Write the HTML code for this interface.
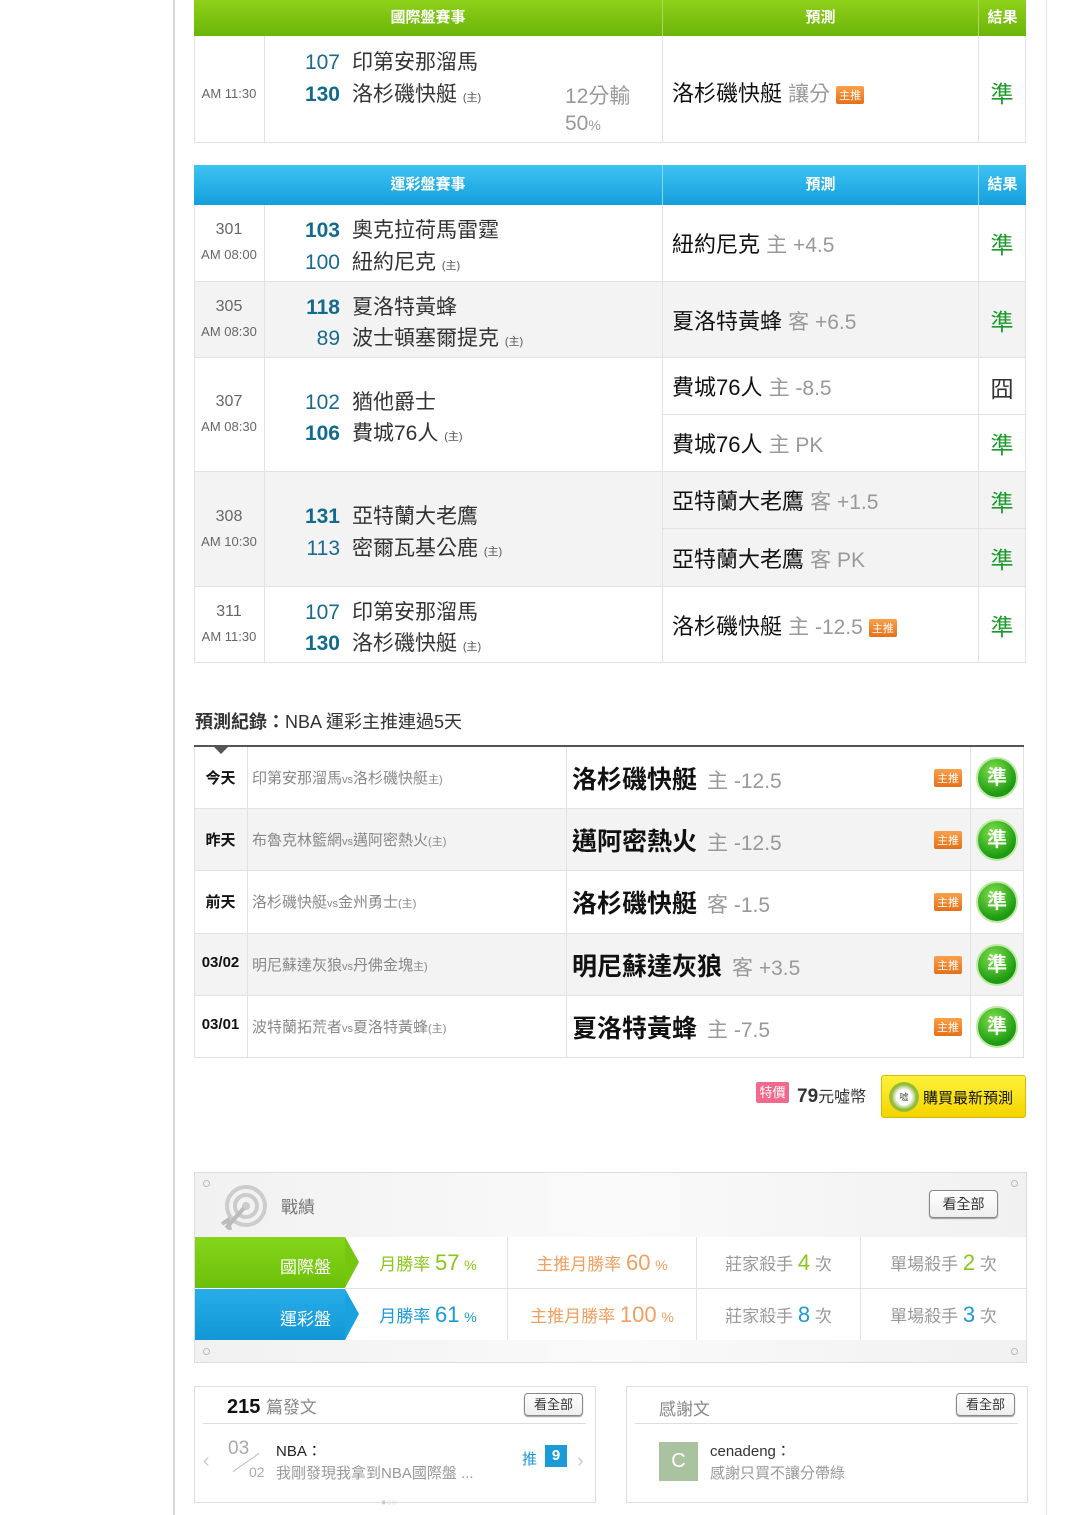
<!DOCTYPE html>
<html><head><meta charset="utf-8"><style>
*{margin:0;padding:0;box-sizing:border-box}
body{width:1080px;height:1515px;background:#fff;position:relative;overflow:hidden;font-family:"Liberation Sans","Noto Sans CJK TC",sans-serif;color:#222}
.a{position:absolute}
.vl{position:absolute;width:1px;background:#e2e2e2}
.hl{position:absolute;height:1px;background:#e2e2e2}
.hdr{position:absolute;height:36px;color:#fff;font-weight:bold;font-size:15px;line-height:36px;text-align:center}
.g{background:linear-gradient(#8fd11a,#6cb40a)}
.b{background:linear-gradient(#3ec3f2,#149fdc)}
.tm{position:absolute;width:70px;text-align:center;color:#666;font-size:13px}
.tm b{display:block;font-weight:normal;font-size:16px;margin-bottom:8px}
.team{position:absolute;font-size:21px;color:#333;white-space:nowrap}
.team span{display:inline-block;width:43px;text-align:right;margin-right:12px;color:#1a6a8e}
.team span.w{font-weight:bold;color:#126a8c}
.team small{font-size:11px;color:#555}
.pr{position:absolute;font-size:22px;color:#111;white-space:nowrap}
.pr i{font-style:normal;color:#999;font-size:21px}
.tag{display:inline-block;background:linear-gradient(#f9a14a,#e4701a);color:#fff;font-size:11px;padding:1px 3px;margin-left:6px;vertical-align:middle;border-radius:2px}
.res{position:absolute;width:48px;text-align:center;font-size:23px;color:#1a9a2a}
.grey{position:absolute;background:#f3f3f3}
.rec{position:absolute;left:194px;width:829px;height:62px}
.rec .d{position:absolute;left:0;width:53px;text-align:center;top:20px;font-size:15px;font-weight:bold;color:#111}
.rec .m{position:absolute;left:58px;top:20px;font-size:15px;color:#888;white-space:nowrap}
.rec .m small{font-size:11px}
.rec .p{position:absolute;left:378px;top:13px;font-size:25px;font-weight:bold;color:#111;white-space:nowrap}
.rec .p i{font-style:normal;font-weight:normal;color:#999;font-size:21px;margin-left:10px}
.rec .t{position:absolute;left:740px;top:22px}
.rec .t .tag{margin:0}
.rec .c{position:absolute;left:782px;top:10px;width:42px;height:42px;border-radius:50%;background:radial-gradient(circle at 40% 30%,#7fe04a,#1c9a12 70%);border:2px solid #bfe8a8;color:#fff;font-size:20px;font-weight:bold;text-align:center;line-height:38px}
.cell{position:absolute;font-size:17px;color:#999;text-align:center;line-height:52px}
.cell em{font-style:normal;font-size:22px}
.btn{position:absolute;border:1px solid #888;border-radius:4px;font-size:14px;color:#333;text-align:center;background:linear-gradient(#fff,#eee);box-shadow:0 1px 1px #999}
</style></head><body>
<div class="vl" style="left:173px;top:0;height:1515px;background:#d8d8d8;width:2px"></div>
<div class="vl" style="left:1046px;top:0;height:1515px;background:#e6e6e6"></div>

<!-- table 1 -->
<div class="hdr g" style="left:194px;top:0;width:468px">國際盤賽事</div>
<div class="hdr g" style="left:663px;top:0;width:315px">預測</div>
<div class="hdr g" style="left:979px;top:0;width:47px">結果</div>
<div class="vl" style="left:662px;top:0;height:36px;background:#a8d860"></div>
<div class="vl" style="left:978px;top:0;height:36px;background:#a8d860"></div>
<div class="vl" style="left:194px;top:36px;height:107px"></div>
<div class="vl" style="left:264px;top:36px;height:107px"></div>
<div class="vl" style="left:662px;top:36px;height:107px"></div>
<div class="vl" style="left:978px;top:36px;height:107px"></div>
<div class="vl" style="left:1025px;top:36px;height:107px"></div>
<div class="hl" style="left:194px;top:142px;width:832px"></div>
<div class="tm" style="left:194px;top:86px">AM 11:30</div>
<div class="team" style="left:297px;top:46px"><span>107</span>印第安那溜馬</div>
<div class="team" style="left:297px;top:78px"><span class="w">130</span>洛杉磯快艇 <small>(主)</small></div>
<div class="a" style="left:565px;top:83px;font-size:21px;color:#999;line-height:27px">12分輸<br>50<small style="font-size:14px">%</small></div>
<div class="pr" style="left:672px;top:76px">洛杉磯快艇 <i>讓分</i><span class="tag">主推</span></div>
<div class="res" style="left:978px;top:75px">準</div>

<!-- table 2 -->
<div class="grey" style="left:195px;top:281px;width:830px;height:76px"></div>
<div class="grey" style="left:195px;top:471px;width:830px;height:115px"></div>
<div class="hdr b" style="left:194px;top:165px;width:468px;height:40px;line-height:40px">運彩盤賽事</div>
<div class="hdr b" style="left:663px;top:165px;width:315px;height:40px;line-height:40px">預測</div>
<div class="hdr b" style="left:979px;top:165px;width:47px;height:40px;line-height:40px">結果</div>
<div class="vl" style="left:662px;top:165px;height:40px;background:#8fd8f5"></div>
<div class="vl" style="left:978px;top:165px;height:40px;background:#8fd8f5"></div>
<div class="vl" style="left:194px;top:205px;height:457px"></div>
<div class="vl" style="left:264px;top:205px;height:457px"></div>
<div class="vl" style="left:662px;top:205px;height:457px"></div>
<div class="vl" style="left:978px;top:205px;height:457px"></div>
<div class="vl" style="left:1025px;top:205px;height:457px"></div>
<div class="hl" style="left:194px;top:281px;width:832px"></div>
<div class="hl" style="left:194px;top:357px;width:832px"></div>
<div class="hl" style="left:662px;top:414px;width:364px"></div>
<div class="hl" style="left:194px;top:471px;width:832px"></div>
<div class="hl" style="left:662px;top:528px;width:364px"></div>
<div class="hl" style="left:194px;top:586px;width:832px"></div>
<div class="hl" style="left:194px;top:662px;width:832px"></div>

<div class="tm" style="left:194px;top:221px"><b>301</b>AM 08:00</div>
<div class="team" style="left:297px;top:214px"><span class="w">103</span>奧克拉荷馬雷霆</div>
<div class="team" style="left:297px;top:246px"><span>100</span>紐約尼克 <small>(主)</small></div>
<div class="pr" style="left:672px;top:227px">紐約尼克 <i>主 +4.5</i></div>
<div class="res" style="left:978px;top:226px">準</div>

<div class="tm" style="left:194px;top:298px"><b>305</b>AM 08:30</div>
<div class="team" style="left:297px;top:291px"><span class="w">118</span>夏洛特黃蜂</div>
<div class="team" style="left:297px;top:322px"><span>89</span>波士頓塞爾提克 <small>(主)</small></div>
<div class="pr" style="left:672px;top:304px">夏洛特黃蜂 <i>客 +6.5</i></div>
<div class="res" style="left:978px;top:303px">準</div>

<div class="tm" style="left:194px;top:393px"><b>307</b>AM 08:30</div>
<div class="team" style="left:297px;top:386px"><span>102</span>猶他爵士</div>
<div class="team" style="left:297px;top:417px"><span class="w">106</span>費城76人 <small>(主)</small></div>
<div class="pr" style="left:672px;top:370px">費城76人 <i>主 -8.5</i></div>
<div class="res" style="left:978px;top:370px;color:#333">囧</div>
<div class="pr" style="left:672px;top:427px">費城76人 <i>主 PK</i></div>
<div class="res" style="left:978px;top:426px">準</div>

<div class="tm" style="left:194px;top:508px"><b>308</b>AM 10:30</div>
<div class="team" style="left:297px;top:500px"><span class="w">131</span>亞特蘭大老鷹</div>
<div class="team" style="left:297px;top:532px"><span>113</span>密爾瓦基公鹿 <small>(主)</small></div>
<div class="pr" style="left:672px;top:484px">亞特蘭大老鷹 <i>客 +1.5</i></div>
<div class="res" style="left:978px;top:484px">準</div>
<div class="pr" style="left:672px;top:542px">亞特蘭大老鷹 <i>客 PK</i></div>
<div class="res" style="left:978px;top:541px">準</div>

<div class="tm" style="left:194px;top:603px"><b>311</b>AM 11:30</div>
<div class="team" style="left:297px;top:596px"><span>107</span>印第安那溜馬</div>
<div class="team" style="left:297px;top:627px"><span class="w">130</span>洛杉磯快艇 <small>(主)</small></div>
<div class="pr" style="left:672px;top:609px">洛杉磯快艇 <i>主 -12.5</i><span class="tag">主推</span></div>
<div class="res" style="left:978px;top:608px">準</div>

<!-- record -->
<div class="a" style="left:195px;top:708px;font-size:18px;color:#333"><b>預測紀錄：</b>NBA 運彩主推連過5天</div>
<div class="a" style="left:194px;top:745px;width:830px;height:2px;background:#555"></div>
<div class="a" style="left:214px;top:747px;width:0;height:0;border-left:7px solid transparent;border-right:7px solid transparent;border-top:7px solid #555"></div>
<div class="grey" style="left:195px;top:808px;width:828px;height:62px"></div>
<div class="grey" style="left:195px;top:933px;width:828px;height:62px"></div>
<div class="vl" style="left:194px;top:747px;height:310px"></div>
<div class="vl" style="left:247px;top:747px;height:310px"></div>
<div class="vl" style="left:566px;top:747px;height:310px"></div>
<div class="vl" style="left:970px;top:747px;height:310px"></div>
<div class="vl" style="left:1023px;top:747px;height:310px"></div>
<div class="hl" style="left:194px;top:808px;width:830px"></div>
<div class="hl" style="left:194px;top:870px;width:830px"></div>
<div class="hl" style="left:194px;top:933px;width:830px"></div>
<div class="hl" style="left:194px;top:995px;width:830px"></div>
<div class="hl" style="left:194px;top:1057px;width:830px"></div>

<div class="rec" style="top:747px"><div class="d">今天</div><div class="m">印第安那溜馬<small>vs</small>洛杉磯快艇<small>主)</small></div><div class="p">洛杉磯快艇<i>主 -12.5</i></div><div class="t"><span class="tag">主推</span></div><div class="c">準</div></div>
<div class="rec" style="top:809px"><div class="d">昨天</div><div class="m">布魯克林籃網<small>vs</small>邁阿密熱火<small>(主)</small></div><div class="p">邁阿密熱火<i>主 -12.5</i></div><div class="t"><span class="tag">主推</span></div><div class="c">準</div></div>
<div class="rec" style="top:871px"><div class="d">前天</div><div class="m">洛杉磯快艇<small>vs</small>金州勇士<small>(主)</small></div><div class="p">洛杉磯快艇<i>客 -1.5</i></div><div class="t"><span class="tag">主推</span></div><div class="c">準</div></div>
<div class="rec" style="top:934px"><div class="d">03/02</div><div class="m">明尼蘇達灰狼<small>vs</small>丹佛金塊<small>主)</small></div><div class="p">明尼蘇達灰狼<i>客 +3.5</i></div><div class="t"><span class="tag">主推</span></div><div class="c">準</div></div>
<div class="rec" style="top:996px"><div class="d">03/01</div><div class="m">波特蘭拓荒者<small>vs</small>夏洛特黃蜂<small>(主)</small></div><div class="p">夏洛特黃蜂<i>主 -7.5</i></div><div class="t"><span class="tag">主推</span></div><div class="c">準</div></div>

<!-- price -->
<div class="a" style="left:756px;top:1082px;width:33px;height:21px;background:#f06a8e;color:#fff;font-size:13px;text-align:center;line-height:21px;border-radius:2px">特價</div>
<div class="a" style="left:797px;top:1083px;font-size:16px;color:#333"><b style="font-size:19px">79</b>元噓幣</div>
<div class="a" style="left:881px;top:1075px;width:145px;height:43px;background:linear-gradient(#fff23a,#f3d400);border:1px solid #d8b800;border-radius:3px"></div>
<div class="a" style="left:889px;top:1082px;width:30px;height:30px;border-radius:50%;background:radial-gradient(#fff 35%,#8db83a 60%,#e6d200);font-size:9px;text-align:center;line-height:30px;color:#555">噓</div>
<div class="a" style="left:923px;top:1087px;font-size:15px;color:#111">購買最新預測</div>

<!-- stats -->
<div class="a" style="left:194px;top:1172px;width:833px;height:191px;background:linear-gradient(90deg,#f1f1f1,#fafafa 50%,#f1f1f1);border:1px solid #ddd"></div>
<div class="a" style="left:203px;top:1180px;width:7px;height:7px;border:1px solid #bbb;border-radius:50%"></div>
<div class="a" style="left:1011px;top:1180px;width:7px;height:7px;border:1px solid #bbb;border-radius:50%"></div>
<div class="a" style="left:203px;top:1348px;width:7px;height:7px;border:1px solid #bbb;border-radius:50%"></div>
<div class="a" style="left:1011px;top:1348px;width:7px;height:7px;border:1px solid #bbb;border-radius:50%"></div>
<svg class="a" style="left:218px;top:1184px" width="52" height="48" viewBox="0 0 52 48"><circle cx="28" cy="22" r="19" fill="none" stroke="#ccc" stroke-width="4"/><circle cx="28" cy="22" r="11" fill="none" stroke="#ccc" stroke-width="4"/><circle cx="28" cy="22" r="4" fill="#ccc"/><path d="M26 24 L8 44 M4 40 L10 36 L12 46" stroke="#bbb" stroke-width="4" fill="none"/></svg>
<div class="a" style="left:281px;top:1193px;font-size:17px;color:#777">戰績</div>
<div class="btn" style="left:929px;top:1190px;width:69px;height:28px;line-height:26px">看全部</div>
<div class="a" style="left:195px;top:1237px;width:831px;height:103px;background:#fff"></div>
<div class="a" style="left:195px;top:1237px;width:150px;height:51px;background:linear-gradient(#86d51b,#6cbf08)"></div>
<div class="a" style="left:345px;top:1237px;width:0;height:0;border-top:25px solid transparent;border-bottom:26px solid transparent;border-left:14px solid #75c60e"></div>
<div class="a" style="left:195px;top:1289px;width:150px;height:51px;background:linear-gradient(#27aee8,#1297d6)"></div>
<div class="a" style="left:345px;top:1289px;width:0;height:0;border-top:25px solid transparent;border-bottom:26px solid transparent;border-left:14px solid #1aa2de"></div>
<div class="a" style="left:280px;top:1253px;color:#fff;font-size:17px">國際盤</div>
<div class="a" style="left:280px;top:1305px;color:#fff;font-size:17px">運彩盤</div>
<div class="hl" style="left:345px;top:1288px;width:681px"></div>
<div class="vl" style="left:507px;top:1237px;height:103px"></div>
<div class="vl" style="left:696px;top:1237px;height:103px"></div>
<div class="vl" style="left:860px;top:1237px;height:103px"></div>
<div class="cell" style="left:360px;top:1237px;width:136px;color:#8bc61a">月勝率 <em>57</em> <small>%</small></div>
<div class="cell" style="left:508px;top:1237px;width:188px;color:#f0a060">主推月勝率 <em>60</em> <small>%</small></div>
<div class="cell" style="left:697px;top:1237px;width:163px">莊家殺手 <em style="color:#8bc61a">4</em> 次</div>
<div class="cell" style="left:861px;top:1237px;width:165px">單場殺手 <em style="color:#8bc61a">2</em> 次</div>
<div class="cell" style="left:360px;top:1289px;width:136px;color:#1a9ad6">月勝率 <em>61</em> <small>%</small></div>
<div class="cell" style="left:508px;top:1289px;width:188px;color:#f0a060">主推月勝率 <em>100</em> <small>%</small></div>
<div class="cell" style="left:697px;top:1289px;width:163px">莊家殺手 <em style="color:#1a9ad6">8</em> 次</div>
<div class="cell" style="left:861px;top:1289px;width:165px">單場殺手 <em style="color:#1a9ad6">3</em> 次</div>

<!-- posts -->
<div class="a" style="left:194px;top:1386px;width:402px;height:117px;border:1px solid #ddd"></div>
<div class="a" style="left:227px;top:1393px;font-size:20px;color:#111"><b>215</b> <span style="font-size:17px;color:#888">篇發文</span></div>
<div class="btn" style="left:524px;top:1393px;width:59px;height:23px;line-height:21px;font-size:13px">看全部</div>
<div class="hl" style="left:203px;top:1423px;width:383px;background:#ddd"></div>
<div class="a" style="left:203px;top:1450px;font-size:20px;color:#ccc">‹</div>
<div class="a" style="left:577px;top:1450px;font-size:20px;color:#ccc">›</div>
<div class="a" style="left:228px;top:1438px;font-size:19px;color:#aaa">03</div>
<div class="a" style="left:230px;top:1462px;width:32px;height:1px;background:#bbb;transform:rotate(-35deg)"></div>
<div class="a" style="left:249px;top:1464px;font-size:14px;color:#aaa">02</div>
<div class="a" style="left:276px;top:1440px;font-size:15px;color:#222">NBA：</div>
<div class="a" style="left:276px;top:1462px;font-size:15px;color:#999">我剛發現我拿到NBA國際盤 ...</div>
<div class="a" style="left:522px;top:1448px;font-size:15px;color:#1a9ad6">推</div>
<div class="a" style="left:545px;top:1445px;width:22px;height:22px;background:#1a9ad6;color:#fff;font-weight:bold;font-size:15px;text-align:center;line-height:22px">9</div>
<div class="a" style="left:381px;top:1497px;font-size:9px;color:#ccc">●○○</div>

<div class="a" style="left:626px;top:1386px;width:402px;height:117px;border:1px solid #ddd"></div>
<div class="a" style="left:659px;top:1395px;font-size:17px;color:#888">感謝文</div>
<div class="btn" style="left:956px;top:1393px;width:59px;height:23px;line-height:21px;font-size:13px">看全部</div>
<div class="hl" style="left:635px;top:1423px;width:383px;background:#ddd"></div>
<div class="a" style="left:659px;top:1442px;width:39px;height:39px;background:#a9c3a0;color:#fff;font-size:20px;text-align:center;line-height:39px">C</div>
<div class="a" style="left:710px;top:1440px;font-size:15px;color:#333">cenadeng：</div>
<div class="a" style="left:710px;top:1462px;font-size:15px;color:#999">感謝只買不讓分帶綠</div>
</body></html>
